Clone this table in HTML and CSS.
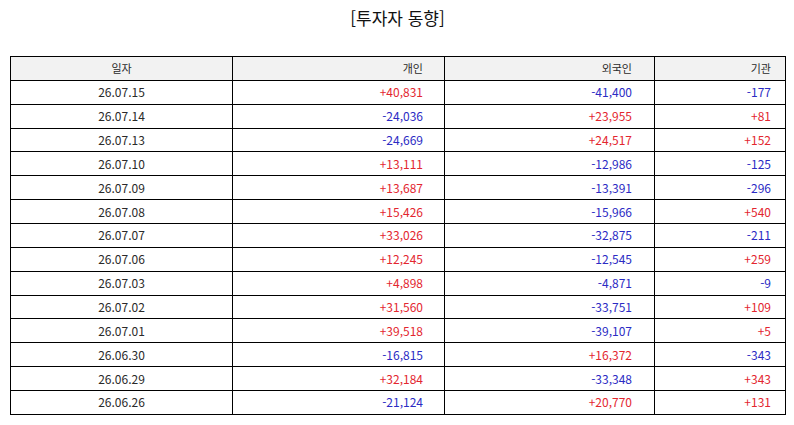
FILE: index.html
```html
<!DOCTYPE html>
<html lang="ko">
<head>
<meta charset="utf-8">
<link rel="stylesheet" href="styles.css">
</head>
<body>
<div class="page">
  <h1 class="title">[투자자 동향]</h1>
  <table class="trend">
    <colgroup>
      <col class="c-date"><col class="c-ind"><col class="c-for"><col class="c-inst">
    </colgroup>
    <thead>
      <tr><th class="center">일자</th><th class="ind">개인</th><th class="for">외국인</th><th class="inst">기관</th></tr>
    </thead>
    <tbody>
      <tr><td class="center">26.07.15</td><td class="ind up">+40,831</td><td class="for down">-41,400</td><td class="inst down">-177</td></tr>
      <tr><td class="center">26.07.14</td><td class="ind down">-24,036</td><td class="for up">+23,955</td><td class="inst up">+81</td></tr>
      <tr><td class="center">26.07.13</td><td class="ind down">-24,669</td><td class="for up">+24,517</td><td class="inst up">+152</td></tr>
      <tr><td class="center">26.07.10</td><td class="ind up">+13,111</td><td class="for down">-12,986</td><td class="inst down">-125</td></tr>
      <tr><td class="center">26.07.09</td><td class="ind up">+13,687</td><td class="for down">-13,391</td><td class="inst down">-296</td></tr>
      <tr><td class="center">26.07.08</td><td class="ind up">+15,426</td><td class="for down">-15,966</td><td class="inst up">+540</td></tr>
      <tr><td class="center">26.07.07</td><td class="ind up">+33,026</td><td class="for down">-32,875</td><td class="inst down">-211</td></tr>
      <tr><td class="center">26.07.06</td><td class="ind up">+12,245</td><td class="for down">-12,545</td><td class="inst up">+259</td></tr>
      <tr><td class="center">26.07.03</td><td class="ind up">+4,898</td><td class="for down">-4,871</td><td class="inst down">-9</td></tr>
      <tr><td class="center">26.07.02</td><td class="ind up">+31,560</td><td class="for down">-33,751</td><td class="inst up">+109</td></tr>
      <tr><td class="center">26.07.01</td><td class="ind up">+39,518</td><td class="for down">-39,107</td><td class="inst up">+5</td></tr>
      <tr><td class="center">26.06.30</td><td class="ind down">-16,815</td><td class="for up">+16,372</td><td class="inst down">-343</td></tr>
      <tr><td class="center">26.06.29</td><td class="ind up">+32,184</td><td class="for down">-33,348</td><td class="inst up">+343</td></tr>
      <tr><td class="center">26.06.26</td><td class="ind down">-21,124</td><td class="for up">+20,770</td><td class="inst up">+131</td></tr>
    </tbody>
  </table>
</div>
</body>
</html>
```
FILE: styles.css
```css
html, body {
  margin: 0;
  padding: 0;
  background: #ffffff;
}
.page {
  padding: 0 9px 0 10px;
  font-family: "Noto Sans CJK KR", "Noto Sans", sans-serif;
  color: #2a2a2a;
}
.title {
  margin: 0;
  height: 56px;
  padding-top: 6px;
  box-sizing: border-box;
  text-align: center;
  font-size: 17px;
  font-weight: normal;
  line-height: 24px;
  color: #111111;
}
.trend {
  width: 775px;
  border-collapse: collapse;
  table-layout: fixed;
  font-size: 12px;
}
.c-date { width: 222px; }
.c-ind { width: 212px; }
.c-for { width: 210px; }
.c-inst { width: 131px; }
.trend th, .trend td {
  border: 1px solid #000000;
  height: 22.87px;
  padding: 0;
  line-height: 14px;
  font-weight: normal;
  white-space: nowrap;
}
.trend th {
  background: #f2f2f2;
  font-size: 11px;
}
.center { text-align: center; }
.ind { text-align: right; padding-right: 21px !important; }
.for { text-align: right; padding-right: 22px !important; }
.inst { text-align: right; padding-right: 14px !important; }
.up { color: #e3262f; }
.down { color: #2b2bc4; }
```
